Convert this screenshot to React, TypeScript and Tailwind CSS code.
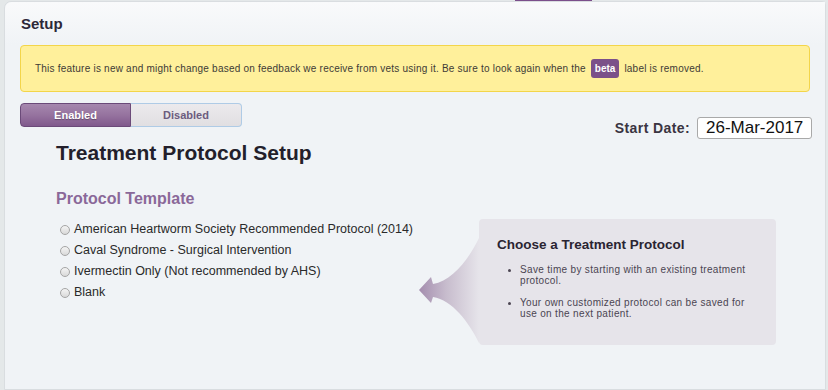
import React from "react";

const templates = [
  "American Heartworm Society Recommended Protocol (2014)",
  "Caval Syndrome - Surgical Intervention",
  "Ivermectin Only (Not recommended by AHS)",
  "Blank",
];

const Radio = () => (
  <span className="w-[10px] h-[10px] rounded-full border border-[#a5a5a5] bg-gradient-to-b from-[#f4f4f4] to-[#d9d9d9] shrink-0" />
);

const Pointer = () => (
  <svg className="absolute left-[-62px] top-0 w-[62px] h-[126px]" viewBox="0 0 62 126">
    <defs>
      <linearGradient id="fade" x1="0" y1="0" x2="1" y2="0">
        <stop offset="0" stopColor="#a48dae" />
        <stop offset="0.45" stopColor="#c7bccd" />
        <stop offset="1" stopColor="#e6e4ea" />
      </linearGradient>
    </defs>
    <path
      d="M2 71 L14 58 L16 65 C35 62 52 40 62 19 L62 124 C52 103 35 81 16 78 L14 84 Z"
      fill="url(#fade)"
    />
  </svg>
);

export default function App() {
  return (
    <div
      className="relative w-[828px] h-[390px] overflow-hidden bg-[#e4e8e9] pl-[4px] pt-[1px] pr-[2px]"
      style={{ fontFamily: '"Liberation Sans", Arial, sans-serif' }}
    >
      {/* active tab marker peeking in at the top */}
      <div className="absolute top-0 left-[515px] w-[77px] h-[1px] bg-[#7b4f8b]" />

      <div className="h-full rounded-tl-[7px] rounded-tr-[4px] border border-[#d9dde0] bg-[#f0f3f6]">
        <div className="h-[43px] pl-[16px] pt-[13px] rounded-tl-[7px] bg-gradient-to-b from-[#f9fafb] to-[#f0f3f6]">
          <h1 className="text-[15px] leading-[18px] font-bold text-[#2c2838]">Setup</h1>
        </div>

        <div className="mx-[15px] h-[47px] flex items-center px-[14px] rounded-[4px] border border-[#f3d54a] bg-[#fff09b] text-[10px] leading-[12px] tracking-[0.22px] text-[#3e3b36]">
          <span>
            This feature is new and might change based on feedback we receive from vets using it. Be sure to look again
            when the
          </span>
          <span className="mx-[5px] h-[19px] px-[4px] rounded-[3px] bg-[#7b5089] text-white font-bold leading-[19px] tracking-normal">
            beta
          </span>
          <span>label is removed.</span>
        </div>

        <div className="flex justify-between items-start pl-[15px] pr-[13px]">
          <div className="mt-[11px] flex h-[24px] w-[222px] text-[11px] font-bold">
            <div className="w-[111px] flex items-center justify-center rounded-l-[4px] border border-[#6b4a79] bg-gradient-to-b from-[#a688ae] via-[#96739f] to-[#80598c] text-white [text-shadow:0_1px_1px_rgba(0,0,0,0.3)]">
              Enabled
            </div>
            <div className="flex-1 flex items-center justify-center rounded-r-[4px] border border-l-0 border-[#afcbe6] bg-gradient-to-b from-[#eceaed] to-[#e1dfe2] text-[#6c5c7e]">
              Disabled
            </div>
          </div>
          <div className="mt-[25px] flex items-center gap-[7px]">
            <span className="text-[14px] font-bold tracking-[0.4px] text-[#3a3441]">Start Date:</span>
            <div className="w-[115px] h-[22px] pl-[8px] flex items-center rounded-[3px] border border-[#a9a9a9] bg-white text-[17px] text-[#111]">
              26-Mar-2017
            </div>
          </div>
        </div>

        <div className="pl-[51px]">
          <h2 className="mt-[2px] text-[21px] leading-[24px] font-bold text-[#231f2b]">Treatment Protocol Setup</h2>

          <div className="mt-[24px] flex">
            <div className="w-[423px]">
              <h3 className="text-[16px] leading-[20px] font-bold text-[#8a6899]">Protocol Template</h3>
              <div className="mt-[10px] pl-[4px]">
                {templates.map((t) => (
                  <label key={t} className="h-[21px] flex items-center gap-[4px] text-[12.5px] text-[#2a2a2a]">
                    <Radio />
                    {t}
                  </label>
                ))}
              </div>
            </div>

            <div className="relative mt-[30px] w-[297px] h-[126px] rounded-[4px] bg-[#e6e4ea] pl-[18px] pt-[18px]">
              <Pointer />
              <h4 className="text-[13.5px] leading-[16px] font-bold text-[#2a2432]">Choose a Treatment Protocol</h4>
              <ul className="mt-[11px] pl-[11px] text-[10px] leading-[11px] tracking-[0.33px] text-[#4b4552] flex flex-col gap-[11px]">
                <li className="flex">
                  <span className="w-[3px] h-[3px] mt-[5px] rounded-full bg-[#4b4552] shrink-0" />
                  <span className="pl-[9px]">
                    Save time by starting with an existing treatment
                    <br />
                    protocol.
                  </span>
                </li>
                <li className="flex">
                  <span className="w-[3px] h-[3px] mt-[5px] rounded-full bg-[#4b4552] shrink-0" />
                  <span className="pl-[9px]">
                    Your own customized protocol can be saved for
                    <br />
                    use on the next patient.
                  </span>
                </li>
              </ul>
            </div>
          </div>
        </div>
      </div>
    </div>
  );
}
